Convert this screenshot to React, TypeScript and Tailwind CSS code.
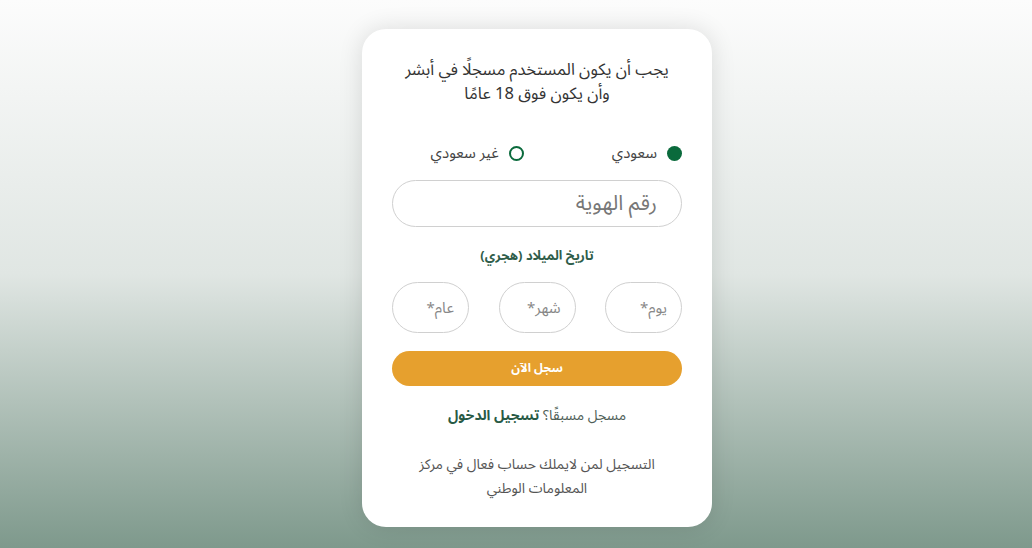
import { useState } from 'react';

const font = { fontFamily: '"Noto Sans Arabic", "Noto Sans", "DejaVu Sans", sans-serif' };

function Radio({ checked, label, onClick }: { checked: boolean; label: string; onClick: () => void }) {
  return (
    <button type="button" onClick={onClick} className="flex items-center gap-[10px]">
      {checked ? (
        <span className="w-[15px] h-[15px] rounded-full bg-[#0a6a3c]" />
      ) : (
        <span className="w-[15px] h-[15px] rounded-full border-2 border-[#0a6a3c]" />
      )}
      <span className="text-[15px] text-[#444]">{label}</span>
    </button>
  );
}

export default function App() {
  const [nationality, setNationality] = useState<'saudi' | 'other'>('saudi');

  return (
    <div
      dir="rtl"
      style={font}
      className="min-h-[548px] w-full flex justify-center pl-[42px] pt-[29px] pb-[21px] bg-gradient-to-b from-[#fcfcfc] via-[#e0e6e3] to-[#7e998c]"
    >
      <div className="w-[350px] h-[498px] bg-white rounded-[24px] shadow-[0_0_24px_rgba(0,0,0,0.12)] flex flex-col items-center px-[30px]">
        <p className="mt-[29px] text-center text-[16.5px] leading-[24px] text-[#333]">
          يجب أن يكون المستخدم مسجلًا في أبشر
          <br />
          وأن يكون فوق 18 عامًا
        </p>

        <div className="mt-[36px] w-full flex items-center gap-[88px]">
          <Radio checked={nationality === 'saudi'} label="سعودي" onClick={() => setNationality('saudi')} />
          <Radio checked={nationality === 'other'} label="غير سعودي" onClick={() => setNationality('other')} />
        </div>

        <input
          placeholder="رقم الهوية"
          className="mt-[15px] w-full h-[47px] rounded-full border border-[#d0d0d0] px-[24px] text-[21px] text-[#333] placeholder:text-[#777] outline-none"
        />

        <h3 className="mt-[20px] text-[13px] font-bold text-[#2f5d4a]">تاريخ الميلاد (هجري)</h3>

        <div className="mt-[16px] w-full flex justify-between">
          {['يوم*', 'شهر*', 'عام*'].map((p) => (
            <input
              key={p}
              placeholder={p}
              className="w-[77px] h-[51px] rounded-[26px] border border-[#d0d0d0] px-[14px] text-[15px] text-[#333] placeholder:text-[#888] outline-none"
            />
          ))}
        </div>

        <button
          type="button"
          className="mt-[18px] w-full h-[35px] rounded-full bg-[#e6a02e] text-white text-[12px] font-bold"
        >
          سجل الآن
        </button>

        <p className="mt-[19px] text-[14px] text-[#4f5f58]">
          مسجل مسبقًا؟ <a href="#" className="font-bold text-[#285a45]">تسجيل الدخول</a>
        </p>

        <p className="mt-[27px] text-center text-[14px] leading-[24px] text-[#555]">
          التسجيل لمن لايملك حساب فعال في مركز
          <br />
          المعلومات الوطني
        </p>
      </div>
    </div>
  );
}
